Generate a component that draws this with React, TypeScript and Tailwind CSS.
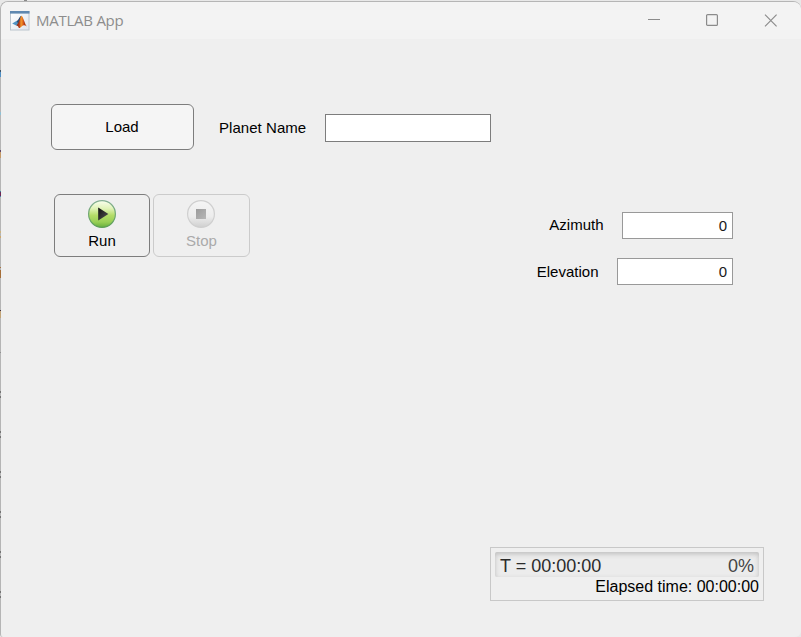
import { useState } from "react";

const edgeMarks = [
  { top: 70, height: 2, color: "#3d5568" },
  { top: 72, height: 5, color: "#4f8fc4" },
  { top: 112, height: 3, color: "#8fc0d4" },
  { top: 150, height: 2, color: "#604868" },
  { top: 152, height: 6, color: "#c59a68" },
  { top: 191, height: 1, color: "#3d8298" },
  { top: 192, height: 4, color: "#6c2855" },
  { top: 196, height: 1, color: "#4386ae" },
  { top: 231, height: 2, color: "#cbb381" },
  { top: 236, height: 2, color: "#cda86d" },
  { top: 267, height: 1, color: "#a9743e" },
  { top: 270, height: 8, color: "#a56e38" },
  { top: 310, height: 1, color: "#403040" },
  { top: 311, height: 7, color: "#c2a477" },
  { top: 352, height: 1, color: "#909090" },
  { top: 391, height: 2, color: "#737373" },
  { top: 396, height: 2, color: "#737373" },
  { top: 431, height: 2, color: "#737373" },
  { top: 436, height: 2, color: "#737373" },
  { top: 471, height: 2, color: "#737373" },
  { top: 476, height: 2, color: "#737373" },
  { top: 511, height: 2, color: "#737373" },
  { top: 516, height: 2, color: "#737373" },
  { top: 551, height: 2, color: "#737373" },
  { top: 556, height: 2, color: "#737373" },
  { top: 591, height: 2, color: "#737373" },
  { top: 596, height: 2, color: "#737373" },
];

function MatlabIcon() {
  return (
    <svg width="20" height="20" viewBox="0 0 20 20">
      <defs>
        <linearGradient id="paper" x1="0" y1="0" x2="1" y2="1">
          <stop offset="0" stopColor="#fff" />
          <stop offset="1" stopColor="#dfe5ec" />
        </linearGradient>
        <linearGradient id="flame" x1="0" y1="0" x2="1" y2="0">
          <stop offset="0" stopColor="#6e1c14" />
          <stop offset=".3" stopColor="#b8401a" />
          <stop offset=".46" stopColor="#f09a2c" />
          <stop offset=".6" stopColor="#e8701e" />
          <stop offset=".78" stopColor="#b03a14" />
          <stop offset="1" stopColor="#d0581c" />
        </linearGradient>
      </defs>
      <rect x=".5" y=".5" width="18.5" height="18.5" fill="url(#paper)" stroke="#bcc5ce" />
      <rect x="0" y="0" width="19.5" height="2.6" fill="#5e88b0" />
      <path d="M2.2 12.4 6.4 10 9 12.2 6.2 14.4Z" fill="#4f93c4" />
      <path d="M6.4 10C8.6 9.4 9.1 6 11.2 4.7L10.2 11 8.5 13Z" fill="#2b4f78" />
      <path d="M11.3 4.7C13.4 5.6 14.4 12 16.8 15.4 14.8 13.9 13.4 13.7 11.9 15.2 10.6 16.5 9.8 17.1 8.8 16.9 8.5 15.5 7.8 14.5 6.2 14.4 8.8 12.5 9.6 8 11.3 4.7Z" fill="url(#flame)" />
    </svg>
  );
}

function RunIcon() {
  return (
    <svg width="30" height="30" viewBox="0 0 30 30">
      <defs>
        <linearGradient id="green" x1="0" y1="0" x2="0" y2="1">
          <stop offset="0" stopColor="#fbfff0" />
          <stop offset=".3" stopColor="#e0f3b7" />
          <stop offset=".55" stopColor="#b4dc68" />
          <stop offset=".8" stopColor="#98cf55" />
          <stop offset="1" stopColor="#66ae3c" />
        </linearGradient>
        <linearGradient id="rim" x1="0" y1="0" x2="0" y2="1">
          <stop offset="0" stopColor="#86b094" />
          <stop offset="1" stopColor="#5c9f56" />
        </linearGradient>
        <linearGradient id="arrow" x1="0" y1="0" x2="1" y2="1">
          <stop offset="0" stopColor="#111" />
          <stop offset="1" stopColor="#555" />
        </linearGradient>
      </defs>
      <circle cx="15" cy="15" r="13.4" fill="url(#green)" stroke="url(#rim)" strokeWidth="1.2" />
      <path d="M11.2 8.6 21.4 15 11.2 21.4Z" fill="url(#arrow)" />
    </svg>
  );
}

function StopIcon() {
  return (
    <svg width="30" height="30" viewBox="0 0 30 30">
      <defs>
        <linearGradient id="gray" x1="0" y1="0" x2="0" y2="1">
          <stop offset="0" stopColor="#f5f5f5" />
          <stop offset=".6" stopColor="#ececec" />
          <stop offset="1" stopColor="#cfcfcf" />
        </linearGradient>
        <linearGradient id="square" x1="0" y1="0" x2="1" y2="1">
          <stop offset="0" stopColor="#9b9b9b" />
          <stop offset="1" stopColor="#b7b7b7" />
        </linearGradient>
      </defs>
      <circle cx="15" cy="15" r="13.4" fill="url(#gray)" stroke="#cfcfcf" strokeWidth="1.2" />
      <rect x="10" y="10" width="10" height="10" fill="url(#square)" />
    </svg>
  );
}

function NumberField({ label, className, labelClassName }: { label: string; className: string; labelClassName: string }) {
  const [value, setValue] = useState("0");
  return (
    <label className="flex h-[27px] items-center justify-end">
      <span className={`mr-[18.5px] ${labelClassName}`}>{label}</span>
      <input
        value={value}
        onChange={(e) => setValue(e.target.value)}
        className={`h-[27px] border border-[#999] bg-white pr-[5px] text-right text-[#1a1a1a] outline-none ${className}`}
      />
    </label>
  );
}

export default function App() {
  const [planet, setPlanet] = useState("");
  return (
    <div className="relative h-[637px] w-[801px] overflow-hidden bg-[#e8e8e8] pt-px font-['Liberation_Sans',Arial,sans-serif] text-[15px] text-black">
      <div className="absolute top-0 left-[24px] h-px w-[3px] bg-[#8a8a8a]" />
      <div className="flex h-[636px] flex-col overflow-hidden rounded-t-[8px] rounded-bl-[3px] rounded-br-[6px] border-t border-l border-[#b5b5b5] bg-[#efefef]">
        <header className="flex h-[37px] shrink-0 items-center bg-[#f3f3f3] pl-[9px]">
          <MatlabIcon />
          <h1 className="ml-[6px] font-['Open_Sans','Noto_Sans',sans-serif] text-[15px] tracking-[-0.25px] text-[#8d8d8d]">MATLAB App</h1>
          <div className="mr-[24px] ml-auto flex items-center gap-[45px] text-[#8b8b8b]">
            <svg width="13" height="13" viewBox="0 0 13 13" fill="none" stroke="currentColor"><path d="M0 5.5h12" /></svg>
            <svg width="13" height="13" viewBox="0 0 13 13" fill="none" stroke="currentColor" strokeWidth="1.2"><rect x=".6" y=".6" width="10.8" height="10.8" rx="1" /></svg>
            <svg width="13" height="13" viewBox="0 0 13 13" fill="none" stroke="currentColor" strokeWidth="1.15"><path d="m1 .7 11.6 11.6M12.6.7 1 12.3" /></svg>
          </div>
        </header>

        <main className="flex flex-1 flex-col pt-[65px]">
          <div className="ml-[50px] flex h-[46px] items-center">
            <button className="h-[46px] w-[143px] rounded-[6px] border border-[#7d7d7d] bg-[#f5f5f5] pr-px">Load</button>
            <label className="mt-[2px] ml-[25px] flex h-[28px] items-center">
              <span className="w-[106px] leading-[28px] tracking-[0.05px]">Planet Name</span>
              <input value={planet} onChange={(e) => setPlanet(e.target.value)} className="h-[28px] w-[166px] border border-[#7d7d7d] bg-white px-1 outline-none" />
            </label>
          </div>

          <div className="mt-[44px] flex items-start justify-between pr-[68px] pl-[53px]">
            <div className="flex gap-[3px]">
              <button className="flex h-[63px] w-[96px] flex-col items-center rounded-[6px] border border-[#7d7d7d] pt-[4px]">
                <RunIcon />
                <span className="mt-[3px] leading-[18px]">Run</span>
              </button>
              <button disabled className="flex h-[63px] w-[97px] flex-col items-center rounded-[6px] border border-[#cbcbcb] pt-[4px] pr-px text-[#aaa]">
                <StopIcon />
                <span className="mt-[3px] pl-px leading-[18px]">Stop</span>
              </button>
            </div>
            <div className="mt-[18px] flex flex-col gap-[19px]">
              <NumberField label="Azimuth" className="w-[111px]" labelClassName="leading-[25px] pb-[2px]" />
              <NumberField label="Elevation" className="w-[116px]" labelClassName="leading-[27px]" />
            </div>
          </div>

          <section className="mt-auto mr-[37px] mb-[36px] ml-auto h-[54px] w-[274px] border border-[#c8c8c8] p-[4px]">
            <div className="flex h-[25px] items-center justify-between rounded-[2px] bg-[#ececec] px-[5px] pt-[4px] text-[18px] text-[#2b2b2b] shadow-[inset_0_2px_5px_#bdbdbd]">
              <span className="leading-[27px]">T = 00:00:00</span>
              <span className="leading-[27px] text-[#444]">0%</span>
            </div>
            <p className="text-right text-[16px] leading-[19px]">Elapsed time: 00:00:00</p>
          </section>
        </main>
      </div>
      {edgeMarks.map((m) => (
        <i key={m.top} className="absolute left-0 w-px" style={{ top: m.top, height: m.height, background: m.color }} />
      ))}
    </div>
  );
}
